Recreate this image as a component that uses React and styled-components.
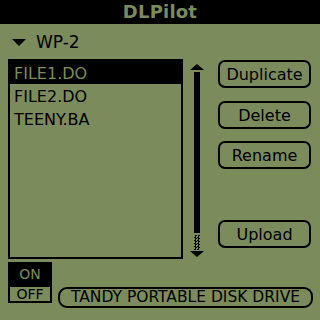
import React from "react";
import styled, { createGlobalStyle } from "styled-components";

const OLIVE = "#7b8b5b";
const INK = "#000000";

const Global = createGlobalStyle`
  html, body { margin: 0; padding: 0; background: ${OLIVE}; }
  body { width: 320px; height: 320px; overflow: hidden; font-family: "DejaVu Sans", "Liberation Sans", sans-serif; color: ${INK}; }
`;

const Screen = styled.div`
  width: 320px;
  height: 320px;
  background: ${OLIVE};
  display: flex;
  flex-direction: column;
`;

const TitleBar = styled.div`
  height: 24px;
  background: ${INK};
  color: ${OLIVE};
  font-weight: bold;
  font-size: 18px;
  line-height: 24px;
  text-align: center;
  letter-spacing: 0.2px;
`;

const Content = styled.div`
  display: flex;
  flex-direction: column;
  padding: 0 7px 0 8px;
`;

const Picker = styled.div`
  display: flex;
  align-items: center;
  gap: 10px;
  height: 35px;
  padding-left: 4px;
  font-size: 17px;
`;

const DownTri = styled.span`
  width: 0;
  height: 0;
  border-left: 7px solid transparent;
  border-right: 7px solid transparent;
  border-top: 7px solid ${INK};
  margin-top: 2px;
`;

const Main = styled.div`
  display: flex;
  height: 200px;
`;

const List = styled.div`
  width: 175px;
  box-sizing: border-box;
  border: 2px solid ${INK};
  display: flex;
  flex-direction: column;
`;

const Row = styled.div`
  height: 21px;
  line-height: 21px;
  padding: 2px 0 0 4px;
  font-size: 16px;
  background: ${(p) => (p.$selected ? INK : "transparent")};
  color: ${(p) => (p.$selected ? OLIVE : INK)};
`;

const Scroll = styled.div`
  width: 14px;
  margin-left: 7px;
  padding-top: 5px;
  display: flex;
  flex-direction: column;
  align-items: center;
`;

const ArrowUp = styled.span`
  width: 0;
  height: 0;
  border-left: 7px solid transparent;
  border-right: 7px solid transparent;
  border-bottom: 6px solid ${INK};
`;

const ArrowDown = styled.span`
  width: 0;
  height: 0;
  border-left: 7px solid transparent;
  border-right: 7px solid transparent;
  border-top: 6px solid ${INK};
`;

const Thumb = styled.div`
  width: 6px;
  height: 161px;
  margin-top: 2px;
  background: ${INK};
`;

const Track = styled.div`
  width: 6px;
  height: 15px;
  margin: 2px 0 1px;
  background-image: conic-gradient(${INK} 25%, transparent 0 50%, ${INK} 0 75%, transparent 0);
  background-size: 3px 3px;
`;

const Buttons = styled.div`
  margin-left: 14px;
  padding-top: 1px;
  display: flex;
  flex-direction: column;
  width: 93px;
`;

const Button = styled.div`
  box-sizing: border-box;
  height: 28px;
  margin-top: ${(p) => p.$gap || 0}px;
  border: 2px solid ${INK};
  border-radius: 7px;
  display: flex;
  align-items: center;
  justify-content: center;
  font-size: 16px;
`;

const Bottom = styled.div`
  display: flex;
  align-items: flex-end;
  margin-top: 3px;
`;

const Toggle = styled.div`
  display: flex;
  flex-direction: column;
  width: 44px;
  margin-bottom: 5px;
`;

const ToggleItem = styled.div`
  box-sizing: border-box;
  height: ${(p) => (p.$on ? 23 : 18)}px;
  background: ${(p) => (p.$on ? INK : "transparent")};
  color: ${(p) => (p.$on ? OLIVE : INK)};
  border: 2px solid ${INK};
  font-size: 14px;
  line-height: 14px;
  display: flex;
  align-items: center;
  justify-content: center;
`;

const Drive = styled.div`
  box-sizing: border-box;
  margin-left: 6px;
  width: 255px;
  height: 21px;
  border: 2px solid ${INK};
  border-radius: 9px;
  display: flex;
  align-items: center;
  justify-content: center;
  font-size: 15.5px;
  line-height: 1;
`;

const files = ["FILE1.DO", "FILE2.DO", "TEENY.BA"];

export default function App() {
  return (
    <Screen>
      <Global />
      <TitleBar>DLPilot</TitleBar>
      <Content>
        <Picker>
          <DownTri />
          <span>WP-2</span>
        </Picker>
        <Main>
          <List>
            {files.map((f, i) => (
              <Row key={f} $selected={i === 0}>{f}</Row>
            ))}
          </List>
          <Scroll>
            <ArrowUp />
            <Thumb />
            <Track />
            <ArrowDown />
          </Scroll>
          <Buttons>
            <Button>Duplicate</Button>
            <Button $gap={13}>Delete</Button>
            <Button $gap={12}>Rename</Button>
            <Button $gap={51}>Upload</Button>
          </Buttons>
        </Main>
        <Bottom>
          <Toggle>
            <ToggleItem $on>ON</ToggleItem>
            <ToggleItem>OFF</ToggleItem>
          </Toggle>
          <Drive>TANDY PORTABLE DISK DRIVE</Drive>
        </Bottom>
      </Content>
    </Screen>
  );
}
